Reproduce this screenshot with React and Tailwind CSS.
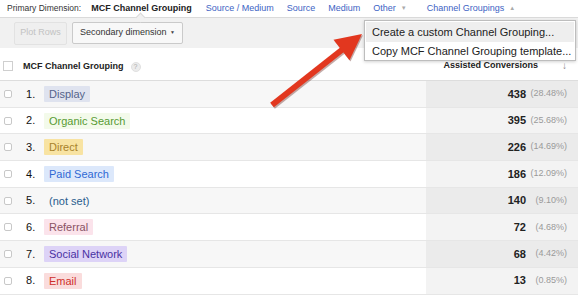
import React from "react";

const rows = [
  { n: 1, label: "Display", chip: "bg-[#dfe3ef] text-[#55648b]", value: 438, pct: "(28.48%)" },
  { n: 2, label: "Organic Search", chip: "bg-[#f3faea] text-[#579a33]", value: 395, pct: "(25.68%)" },
  { n: 3, label: "Direct", chip: "bg-[#f8e3a2] text-[#a8822b]", value: 226, pct: "(14.69%)" },
  { n: 4, label: "Paid Search", chip: "bg-[#dce8fb] text-[#2f68d4]", value: 186, pct: "(12.09%)" },
  { n: 5, label: "(not set)", chip: "text-[#2a5d8e]", value: 140, pct: "(9.10%)" },
  { n: 6, label: "Referral", chip: "bg-[#fbe3eb] text-[#8a5264]", value: 72, pct: "(4.68%)" },
  { n: 7, label: "Social Network", chip: "bg-[#ddd3f7] text-[#4932a3]", value: 68, pct: "(4.42%)" },
  { n: 8, label: "Email", chip: "bg-[#fadcdc] text-[#cf302a]", value: 13, pct: "(0.85%)" },
];

export default function App() {
  return (
    <div className="relative w-[578px] h-[298px] overflow-hidden bg-white font-['Liberation_Sans',Arial,sans-serif] text-[#222]">
      {/* primary dimension bar */}
      <div className="h-[17px] flex items-center pl-[7px] text-[9px] whitespace-nowrap">
        <span className="text-[8.5px] text-[#333]">Primary Dimension:</span>
        <span className="ml-[10px] font-bold">MCF Channel Grouping</span>
        <span className="ml-[14px] text-[#3d63c4]">Source / Medium</span>
        <span className="ml-[13px] text-[#3d63c4]">Source</span>
        <span className="ml-[13px] text-[#3d63c4]">Medium</span>
        <span className="ml-[13px] text-[#3d63c4]">Other</span>
        <span className="ml-[5px] text-[6px] text-[#aaa]">▼</span>
        <span className="ml-[20px] text-[#3d63c4]">Channel Groupings</span>
        <span className="ml-[5px] text-[6px] text-[#aaa]">▲</span>
      </div>

      {/* toolbar */}
      <div className="relative h-[31px] bg-[#f1f1f1] border-t border-[#dadada] flex items-center pl-[14px] gap-[5px]">
        <div className="absolute left-[137px] top-[-4px] w-[7px] h-[7px] rotate-45 bg-[#f1f1f1] border-l border-t border-[#dadada]" />
        <div className="h-[23px] w-[53px] flex items-center justify-center rounded-[2px] border border-[#e2e2e2] bg-[#efefef] text-[9px] text-[#c2c2c2]">
          Plot Rows
        </div>
        <div className="h-[22px] w-[111px] flex items-center justify-between pl-[7px] pr-[7px] rounded-[2px] border border-[#cacaca] bg-[#f8f8f8] text-[9px] text-[#333]">
          <span>Secondary dimension</span>
          <span className="text-[5px] text-[#444]">▼</span>
        </div>
      </div>

      {/* header */}
      <div className="h-[33px] flex items-center pt-[3px] border-b border-[#dddddd]">
        <div className="ml-[3px] w-[10px] h-[10px] border border-[#cfcfcf] bg-white" />
        <span className="ml-[10px] mt-[3px] text-[9px] font-bold">MCF Channel Grouping</span>
        <span className="ml-[7px] mt-[3px] w-[10px] h-[10px] rounded-full bg-[#ececec] border border-[#e0e0e0] flex items-center justify-center text-[7px] text-[#aaa]">
          ?
        </span>
        <div className="flex-1 flex items-center justify-end pr-[11px]">
          <span className="text-[9px] font-bold">Assisted Conversions</span>
          <span className="ml-[24px] text-[10px] text-[#888]">↓</span>
        </div>
      </div>

      {/* rows */}
      {rows.map((r) => {
        const odd = r.n % 2 === 1;
        return (
          <div key={r.n} className="h-[26.7px] flex border-b border-[#e6e6e6]">
            <div className={`flex-1 flex items-center ${odd ? "bg-[#f7f7f7]" : "bg-white"}`}>
              <div className="ml-[4px] w-[8px] h-[8px] rounded-[2px] border border-[#c8c8c8] bg-white" />
              <span className="ml-[14px] w-[18px] text-[11px] text-[#111]">{r.n}.</span>
              <span className={`px-[5px] leading-[16px] text-[11px] rounded-[1px] ${r.chip}`}>{r.label}</span>
            </div>
            <div className={`w-[152px] flex items-center justify-end pr-[11px] ${odd ? "bg-[#ebebeb]" : "bg-[#f3f3f3]"}`}>
              <span className="text-[11px] font-bold text-[#222]">{r.value}</span>
              <span className="w-[41px] text-right text-[9px] text-[#9a9a9a]">{r.pct}</span>
            </div>
          </div>
        );
      })}

      {/* channel groupings menu */}
      <div className="absolute left-[364px] top-[20px] w-[212px] bg-white border border-[#bdbdbd] shadow-[0_1px_3px_rgba(0,0,0,0.18)] px-[1px] pt-[1px] text-[11px] text-[#222]">
        <div className="h-[20px] flex items-center pl-[6px] bg-[#eeeeee]">Create a custom Channel Grouping...</div>
        <div className="h-[18px] flex items-center pl-[6px]">Copy MCF Channel Grouping template...</div>
      </div>

      {/* annotation arrow */}
      <svg className="absolute left-0 top-0 pointer-events-none" width="578" height="298" viewBox="0 0 578 298">
        <g transform="translate(1,1.3)" opacity="0.35">
          <line x1="272" y1="105" x2="343" y2="49" stroke="#5a1008" strokeWidth="6" />
          <polygon points="362,34 349.5,60.3 333.5,39.7" fill="#5a1008" />
        </g>
        <line x1="272" y1="105" x2="343" y2="49" stroke="#e2371f" strokeWidth="6" />
        <polygon points="362,34 349.5,60.3 333.5,39.7" fill="#e2371f" />
      </svg>
    </div>
  );
}
